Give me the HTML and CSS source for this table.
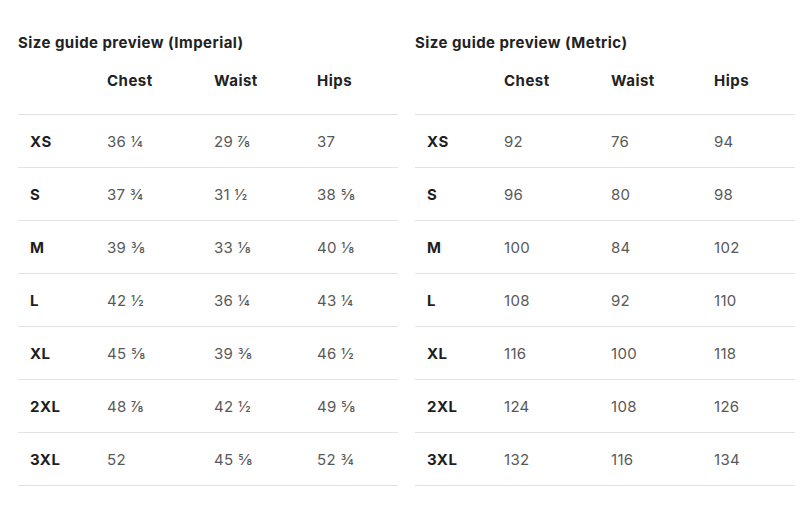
FILE: index.html
```html
<!DOCTYPE html>
<html>
<head>
<meta charset="utf-8">
<link rel="stylesheet" href="styles.css">
</head>
<body>
<div class="page">
  <section class="guide">
    <h2 class="title">Size guide preview (Imperial)</h2>
    <table class="sizes">
      <colgroup><col class="c0"><col class="c1"><col class="c2"><col class="c3"></colgroup>
      <thead><tr><th></th><th>Chest</th><th>Waist</th><th>Hips</th></tr></thead>
      <tbody>
        <tr><td class="sz">XS</td><td>36 ¼</td><td>29 ⅞</td><td>37</td></tr>
        <tr><td class="sz">S</td><td>37 ¾</td><td>31 ½</td><td>38 ⅝</td></tr>
        <tr><td class="sz">M</td><td>39 ⅜</td><td>33 ⅛</td><td>40 ⅛</td></tr>
        <tr><td class="sz">L</td><td>42 ½</td><td>36 ¼</td><td>43 ¼</td></tr>
        <tr><td class="sz">XL</td><td>45 ⅝</td><td>39 ⅜</td><td>46 ½</td></tr>
        <tr><td class="sz">2XL</td><td>48 ⅞</td><td>42 ½</td><td>49 ⅝</td></tr>
        <tr><td class="sz">3XL</td><td>52</td><td>45 ⅝</td><td>52 ¾</td></tr>
      </tbody>
    </table>
  </section>
  <section class="guide">
    <h2 class="title">Size guide preview (Metric)</h2>
    <table class="sizes">
      <colgroup><col class="c0"><col class="c1"><col class="c2"><col class="c3"></colgroup>
      <thead><tr><th></th><th>Chest</th><th>Waist</th><th>Hips</th></tr></thead>
      <tbody>
        <tr><td class="sz">XS</td><td>92</td><td>76</td><td>94</td></tr>
        <tr><td class="sz">S</td><td>96</td><td>80</td><td>98</td></tr>
        <tr><td class="sz">M</td><td>100</td><td>84</td><td>102</td></tr>
        <tr><td class="sz">L</td><td>108</td><td>92</td><td>110</td></tr>
        <tr><td class="sz">XL</td><td>116</td><td>100</td><td>118</td></tr>
        <tr><td class="sz">2XL</td><td>124</td><td>108</td><td>126</td></tr>
        <tr><td class="sz">3XL</td><td>132</td><td>116</td><td>134</td></tr>
      </tbody>
    </table>
  </section>
</div>
</body>
</html>
```
FILE: styles.css
```css
html, body {
  margin: 0;
  padding: 0;
  background: #fff;
}
body {
  font-family: Inter, "Open Sans", "Liberation Sans", sans-serif;
  color: #222;
}
.page {
  display: flex;
  gap: 17px;
  padding-left: 18px;
}
.guide {
  width: 380px;
}
.title {
  margin: 33px 0 0 0;
  font-size: 15px;
  line-height: 20px;
  font-weight: 700;
  letter-spacing: 0.45px;
  color: #222;
}
.sizes {
  width: 380px;
  table-layout: fixed;
  border-collapse: collapse;
}
.c0 { width: 77px; }
.c1 { width: 107px; }
.c2 { width: 103px; }
.c3 { width: 93px; }
.sizes th {
  height: 61px;
  box-sizing: border-box;
  padding: 18px 0 0 12px;
  vertical-align: top;
  text-align: left;
  font-size: 15px;
  line-height: 20px;
  font-weight: 700;
  letter-spacing: 0.5px;
  color: #222;
  border-bottom: 1px solid #e2e2e2;
}
.sizes td {
  height: 53px;
  box-sizing: border-box;
  padding: 2px 0 0 12px;
  vertical-align: middle;
  text-align: left;
  font-size: 15px;
  line-height: 20px;
  letter-spacing: 0.3px;
  color: #595959;
  border-bottom: 1px solid #e2e2e2;
}
.sizes td.sz {
  font-weight: 700;
  letter-spacing: 0.5px;
  color: #1e1e1e;
}
```
